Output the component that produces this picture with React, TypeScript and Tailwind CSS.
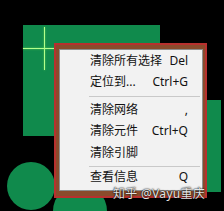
import React from "react";

type Item = { label: string; key?: string; h: string } | { sep: string };

const items: Item[] = [
  { label: "清除所有选择", key: "Del", h: "h-[21px]" },
  { label: "定位到...", key: "Ctrl+G", h: "h-[21px]" },
  { sep: "h-[8px]" },
  { label: "清除网络", key: ",", h: "h-[20px]" },
  { label: "清除元件", key: "Ctrl+Q", h: "h-[22px]" },
  { label: "清除引脚", h: "h-[21px]" },
  { sep: "h-[6px]" },
  { label: "查看信息", key: "Q", h: "h-[16px]" },
];

function MenuRow({ label, shortcut, h }: { label: string; shortcut?: string; h: string }) {
  return (
    <div className={`flex ${h} items-center justify-between pl-[30px] pr-[14px]`}>
      <span>{label}</span>
      {shortcut && <span>{shortcut}</span>}
    </div>
  );
}

export default function App() {
  return (
    <div className="relative h-[211px] w-[224px] overflow-hidden bg-black">
      {/* pcb copper */}
      <div className="absolute left-[23px] top-[25px] h-[111px] w-[137px] bg-[#108a4c]" />
      <div className="absolute left-[207px] top-[100px] h-[92px] w-[14px] bg-[#108a4c]" />
      <div className="absolute left-[7px] top-[162px] h-[48px] w-[48px] rounded-full bg-[#108a4c]" />
      <div className="absolute left-[53px] top-[184px] h-[54px] w-[54px] rounded-full bg-[#108a4c]" />

      {/* crosshair */}
      <div className="absolute left-[44px] top-[27px] h-[43px] w-px bg-[#b4ff8c] shadow-[0_0_2px_#6fdc5a]" />
      <div className="absolute left-[23px] top-[48px] h-px w-[35px] bg-[#b4ff8c] shadow-[0_0_2px_#6fdc5a]" />

      {/* selected component */}
      <div className="absolute left-[54px] top-[43px] h-[155px] w-[153px] border-2 border-[#b8302e]" />
      <div className="absolute left-[56px] top-[45px] h-[151px] w-[149px] bg-[#8a4b2c]" />

      {/* context menu */}
      <div
        className="absolute left-[59px] top-[49px] flex h-[142px] w-[144px] flex-col border border-[#8e8e8e] bg-[#f2f2f2] text-[12px] leading-none text-[#111]"
        style={{ fontFamily: '"Noto Sans", "Noto Sans CJK SC", sans-serif' }}
      >
        {items.map((it, i) =>
          "sep" in it ? (
            <div key={i} className={`flex ${it.sep} items-center pl-[29px] pr-[2px]`}>
              <div className="h-px w-full bg-[#c9c9c9]" />
            </div>
          ) : (
            <MenuRow key={i} label={it.label} shortcut={it.key} h={it.h} />
          )
        )}
      </div>

      {/* watermark */}
      <div
        className="absolute left-[113px] top-[188px] text-[12px] leading-none tracking-[0.3px] text-white/90 [text-shadow:0_0_2px_#000,0_0_1px_#000]"
        style={{ fontFamily: '"Noto Sans", "Noto Sans CJK SC", sans-serif' }}
      >
        知乎 @Vayu重庆
      </div>
    </div>
  );
}
